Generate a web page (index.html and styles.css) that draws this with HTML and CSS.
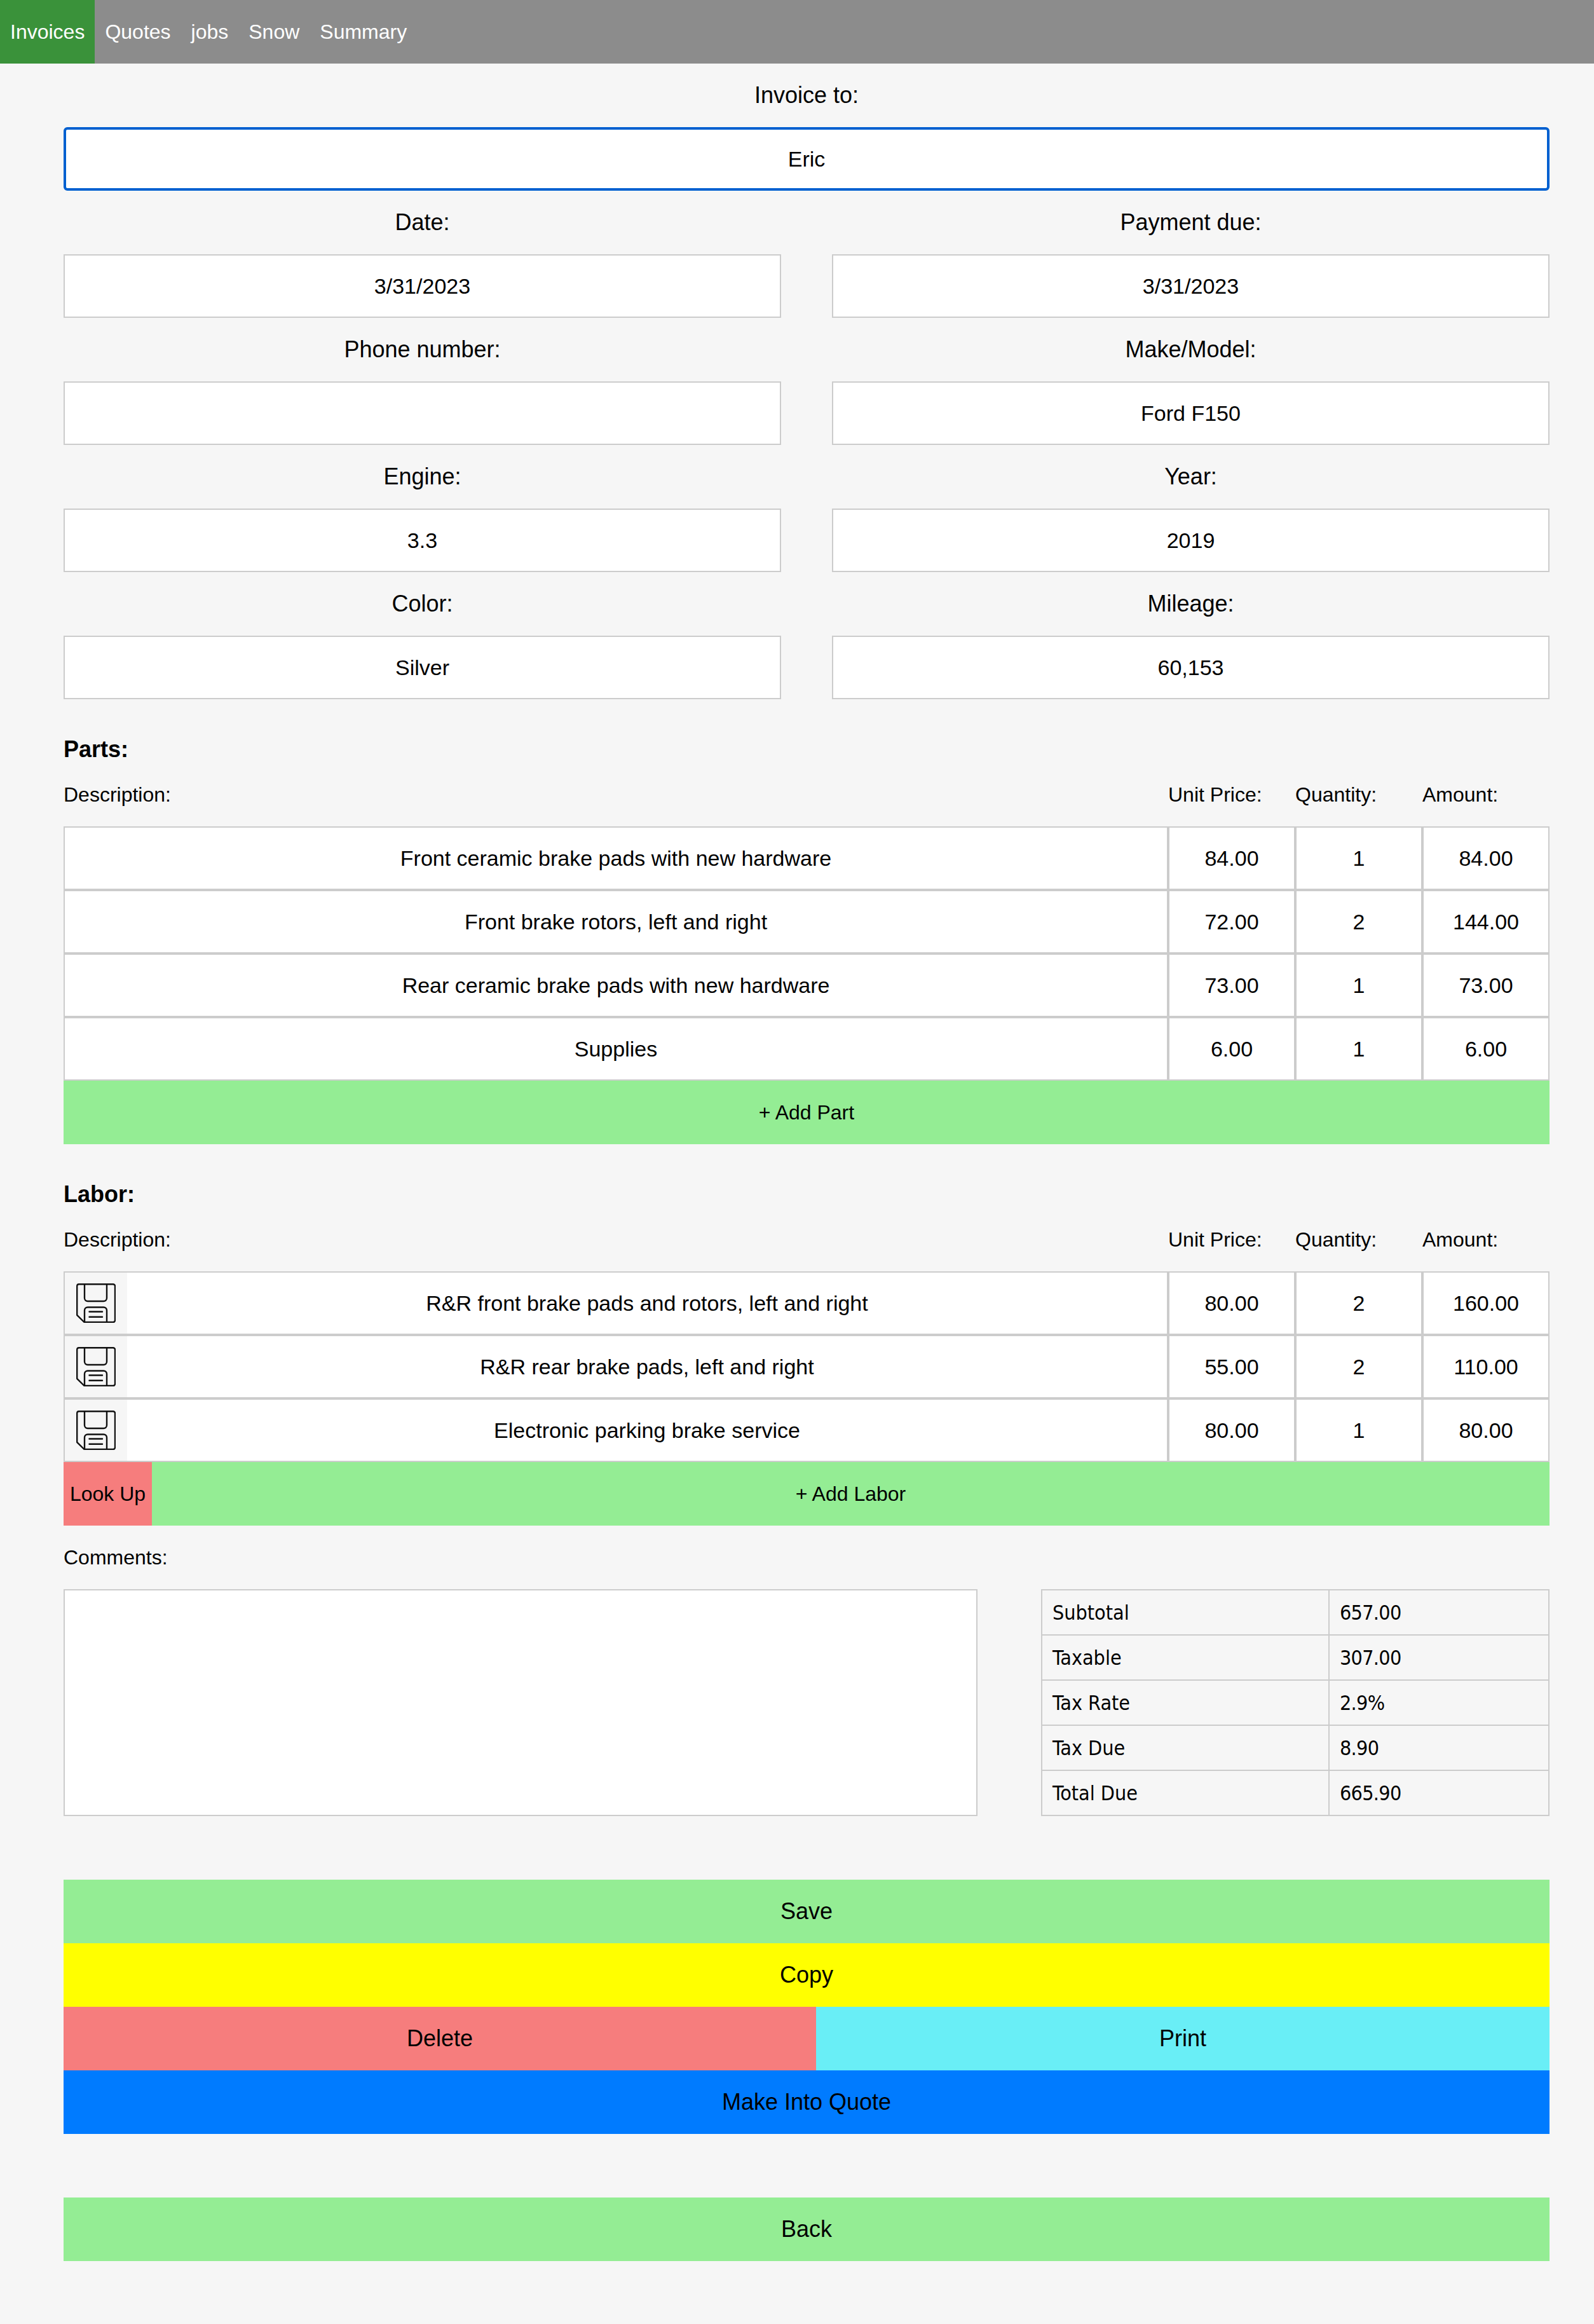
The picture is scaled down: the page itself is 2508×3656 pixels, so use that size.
FILE: index.html
```html
<!DOCTYPE html>
<html lang="en">
<head>
    <meta charset="UTF-8">
    <title>Invoice</title>
    <link rel="stylesheet" href="styles.css">
</head>
<body>
    <nav class="topnav">
        <a class="nav-link active">Invoices</a>
        <a class="nav-link">Quotes</a>
        <a class="nav-link">jobs</a>
        <a class="nav-link">Snow</a>
        <a class="nav-link">Summary</a>
    </nav>

    <main class="container">
        <div class="field-label">Invoice to:</div>
        <div class="field focused">Eric</div>

        <div class="field-grid">
            <div>
                <div class="field-label">Date:</div>
                <div class="field">3/31/2023</div>
            </div>
            <div>
                <div class="field-label">Payment due:</div>
                <div class="field">3/31/2023</div>
            </div>
            <div>
                <div class="field-label">Phone number:</div>
                <div class="field"></div>
            </div>
            <div>
                <div class="field-label">Make/Model:</div>
                <div class="field">Ford F150</div>
            </div>
            <div>
                <div class="field-label">Engine:</div>
                <div class="field">3.3</div>
            </div>
            <div>
                <div class="field-label">Year:</div>
                <div class="field">2019</div>
            </div>
            <div>
                <div class="field-label">Color:</div>
                <div class="field">Silver</div>
            </div>
            <div>
                <div class="field-label">Mileage:</div>
                <div class="field">60,153</div>
            </div>
        </div>

        <h2 class="section-title">Parts:</h2>
        <div class="line-head">
            <span class="col-desc">Description:</span>
            <span class="col-num">Unit Price:</span>
            <span class="col-num">Quantity:</span>
            <span class="col-num">Amount:</span>
        </div>
        <div class="line-row">
            <div class="field col-desc">Front ceramic brake pads with new hardware</div>
            <div class="field col-num">84.00</div>
            <div class="field col-num">1</div>
            <div class="field col-num">84.00</div>
        </div>
        <div class="line-row">
            <div class="field col-desc">Front brake rotors, left and right</div>
            <div class="field col-num">72.00</div>
            <div class="field col-num">2</div>
            <div class="field col-num">144.00</div>
        </div>
        <div class="line-row">
            <div class="field col-desc">Rear ceramic brake pads with new hardware</div>
            <div class="field col-num">73.00</div>
            <div class="field col-num">1</div>
            <div class="field col-num">73.00</div>
        </div>
        <div class="line-row">
            <div class="field col-desc">Supplies</div>
            <div class="field col-num">6.00</div>
            <div class="field col-num">1</div>
            <div class="field col-num">6.00</div>
        </div>
        <button class="btn btn-small green">+ Add Part</button>

        <h2 class="section-title">Labor:</h2>
        <div class="line-head">
            <span class="col-desc">Description:</span>
            <span class="col-num">Unit Price:</span>
            <span class="col-num">Quantity:</span>
            <span class="col-num">Amount:</span>
        </div>
        <div class="line-row">
            <div class="field col-desc labor-desc">
                <span class="save-box">
                    <svg class="save-icon" viewBox="0 0 62 62"><use href="#floppy"></use></svg>
                </span>
                <span class="labor-text">R&amp;R front brake pads and rotors, left and right</span>
            </div>
            <div class="field col-num">80.00</div>
            <div class="field col-num">2</div>
            <div class="field col-num">160.00</div>
        </div>
        <div class="line-row">
            <div class="field col-desc labor-desc">
                <span class="save-box">
                    <svg class="save-icon" viewBox="0 0 62 62"><use href="#floppy"></use></svg>
                </span>
                <span class="labor-text">R&amp;R rear brake pads, left and right</span>
            </div>
            <div class="field col-num">55.00</div>
            <div class="field col-num">2</div>
            <div class="field col-num">110.00</div>
        </div>
        <div class="line-row">
            <div class="field col-desc labor-desc">
                <span class="save-box">
                    <svg class="save-icon" viewBox="0 0 62 62"><use href="#floppy"></use></svg>
                </span>
                <span class="labor-text">Electronic parking brake service</span>
            </div>
            <div class="field col-num">80.00</div>
            <div class="field col-num">1</div>
            <div class="field col-num">80.00</div>
        </div>
        <div class="btn-row">
            <button class="btn btn-small red lookup">Look Up</button>
            <button class="btn btn-small green grow">+ Add Labor</button>
        </div>

        <div class="comments-label">Comments:</div>
        <div class="comments-row">
            <div class="comments-box"></div>
            <table class="totals">
                <tr><td class="totals-name">Subtotal</td><td class="totals-value">657.00</td></tr>
                <tr><td class="totals-name">Taxable</td><td class="totals-value">307.00</td></tr>
                <tr><td class="totals-name">Tax Rate</td><td class="totals-value">2.9%</td></tr>
                <tr><td class="totals-name">Tax Due</td><td class="totals-value">8.90</td></tr>
                <tr><td class="totals-name">Total Due</td><td class="totals-value">665.90</td></tr>
            </table>
        </div>

        <div class="actions">
            <button class="btn green">Save</button>
            <button class="btn yellow">Copy</button>
            <div class="btn-row">
                <button class="btn red delete">Delete</button>
                <button class="btn cyan grow">Print</button>
            </div>
            <button class="btn blue">Make Into Quote</button>
        </div>

        <button class="btn green back">Back</button>
    </main>

    <svg class="icon-defs" width="0" height="0">
        <symbol id="floppy" viewBox="0 0 62 62">
            <g fill="none" stroke="#111" stroke-width="2.4" stroke-linejoin="round" stroke-linecap="round">
                <path d="M4 1.2H58a3 3 0 0 1 3 3V58a3 3 0 0 1-3 3H12.5L1.2 49.8V4a3 3 0 0 1 2.8-2.8Z"/>
                <path d="M13 1.2V23a5 5 0 0 0 5 5H43a5 5 0 0 0 5-5V1.2"/>
                <path d="M13 61V42.5a5 5 0 0 1 5-5H43a5 5 0 0 1 5 5V61"/>
                <path d="M20.5 44.5H41M20.5 52.8H41"/>
            </g>
        </symbol>
    </svg>
</body>
</html>
```

FILE: styles.css
```css
* {
    box-sizing: border-box;
}

body {
    margin: 0;
    background: #f6f6f6;
    color: #000;
    font-family: "Liberation Sans", Arial, sans-serif;
    font-size: 32px;
}

.topnav {
    display: flex;
    height: 100px;
    background: #8c8c8c;
}

.nav-link {
    padding: 0 16px;
    line-height: 100px;
    color: #fff;
}

.nav-link.active {
    background: #3a923a;
}

.container {
    padding: 0 70px 99px 100px;
}

.field-label {
    height: 100px;
    line-height: 100px;
    font-size: 36px;
    text-align: center;
}

.field {
    height: 100px;
    line-height: 96px;
    background: #fff;
    border: 2px solid #ccc;
    font-size: 34px;
    text-align: center;
}

.field.focused {
    line-height: 92px;
    border: 4px solid #0060d0;
    border-radius: 6px;
}

.field-grid {
    display: grid;
    grid-template-columns: 1fr 1fr;
    column-gap: 80px;
}

.section-title {
    margin: 0;
    padding-top: 44px;
    height: 116px;
    line-height: 70px;
    font-size: 36px;
    font-weight: bold;
}

.line-head {
    display: flex;
    height: 84px;
    line-height: 68px;
    padding-bottom: 16px;
}

.line-row {
    display: flex;
}

.col-desc {
    flex: 1;
}

.col-num {
    width: 200px;
}

.labor-desc {
    display: flex;
}

.save-box {
    display: flex;
    align-items: center;
    justify-content: center;
    width: 98px;
    height: 96px;
    background: #f6f6f6;
}

.save-icon {
    width: 62px;
    height: 62px;
}

.labor-text {
    flex: 1;
}

.icon-defs {
    display: none;
}

.btn {
    display: block;
    width: 100%;
    height: 100px;
    padding: 0;
    border: none;
    color: #000;
    font-family: inherit;
    font-size: 36px;
}

.btn-small {
    font-size: 32px;
}

.btn-row {
    display: flex;
}

.grow {
    flex: 1;
    width: auto;
}

.green {
    background: #94ed94;
}

.yellow {
    background: #ffff00;
}

.red {
    background: #f67d7d;
}

.cyan {
    background: #69eef6;
}

.blue {
    background: #007bff;
}

.lookup {
    width: 139px;
}

.delete {
    width: 1184px;
}

.comments-label {
    height: 100px;
    line-height: 100px;
}

.comments-row {
    display: flex;
    justify-content: space-between;
}

.comments-box {
    width: 1438px;
    height: 357px;
    background: #fff;
    border: 2px solid #ccc;
}

.totals {
    width: 800px;
    height: 357px;
    border-collapse: collapse;
    font-family: "DejaVu Sans Condensed", "DejaVu Sans", sans-serif;
    font-size: 32px;
}

.totals td {
    padding: 0 16px;
    border: 2px solid #ccc;
}

.totals-name {
    width: 452px;
}

.totals-value {
    letter-spacing: -0.7px;
}

.actions {
    margin-top: 100px;
}

.back {
    margin-top: 100px;
}
```
